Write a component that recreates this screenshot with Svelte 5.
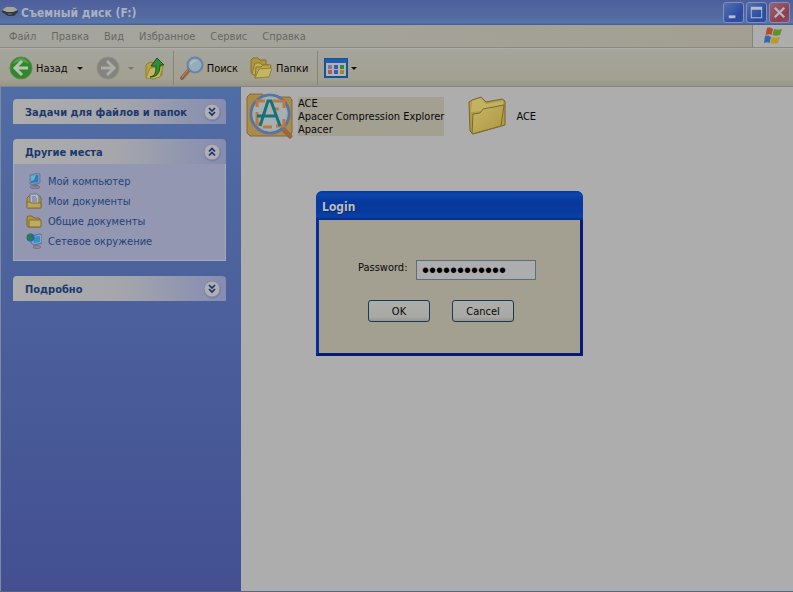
<script lang="ts">
	const menus = ['Файл', 'Правка', 'Вид', 'Избранное', 'Сервис', 'Справка'];
	const places = [
		{ icon: 'computer', name: 'Мой компьютер' },
		{ icon: 'documents', name: 'Мои документы' },
		{ icon: 'folder', name: 'Общие документы' },
		{ icon: 'network', name: 'Сетевое окружение' }
	];
	const viewDots = ['#7d78a0', '#3c5cab', '#2f8b35', '#ab5962', '#3c5cab', '#b07c37'];

	let password = $state('apacer123456');
</script>

{#snippet chevron(up: boolean)}
	<svg class="chevron" viewBox="0 0 20 20" aria-hidden="true">
		<circle cx="10.500" cy="10" r="8.500" fill="#68709a" opacity=".6" />
		<circle cx="10" cy="9" r="8" fill="#aeaeb4" stroke="#8189a8" />
		{#if up}
			<path d="M7 8.500l3-3 3 3M7 12.500l3-3 3 3" fill="none" stroke="#162f68" stroke-width="1.600" />
		{:else}
			<path d="M7 5l3 3 3-3M7 9l3 3 3-3" fill="none" stroke="#162f68" stroke-width="1.600" />
		{/if}
	</svg>
{/snippet}

{#snippet placeIcon(name: string)}
	<svg class="place-icon" viewBox="0 0 16 16" aria-hidden="true">
		{#if name === 'computer'}
			<ellipse cx="9" cy="14" rx="5" ry="1.800" fill="#8d8497" stroke="#655f80" stroke-width=".6" />
			<path d="M8 10l3-1 1 4-4 1z" fill="#756c91" />
			<path d="M4 2l8-2 2 1v9l-8 2-2-1z" fill="#7891b8" stroke="#56719d" stroke-width=".7" />
			<path d="M5 3l7-1v7l-7 1z" fill="#267fba" />
			<path d="M5 3l5-1-2 5-3 1z" fill="#73acd0" />
		{:else if name === 'documents'}
			<path d="M1 5l2-2h11l1 2v9l-1 1H2l-1-1z" fill="#b39a49" stroke="#826b25" />
			<path d="M4 1h7l2 2v8H4z" fill="#b5b9c1" stroke="#667497" />
			<path d="M6 4h4M6 6h5M6 8h5" stroke="#60789e" />
			<path d="M1 9h3l1 1h10v5H1z" fill="#b9a65e" stroke="#856e2b" />
		{:else if name === 'folder'}
			<path d="M1 13V4l1-1h4l2 2h5l1 1v8H2z" fill="#af9843" stroke="#80682b" />
			<path d="M3 7h12v7H3z" fill="#bdac5e" stroke="#846d2d" />
		{:else}
			<ellipse cx="11" cy="14" rx="4" ry="1.500" fill="#938995" stroke="#665f7b" stroke-width=".6" />
			<path d="M5 3l9-2 2 1v8l-8 2-3-2z" fill="#7fa6c7" stroke="#475f91" stroke-width=".8" />
			<path d="M7 4l7-1v6l-6 1z" fill="#388fc0" />
			<circle cx="4.500" cy="4.500" r="4" fill="#22699f" />
			<path d="M1 3c2-3 5-3 5-1L4 4l2 2-2 2c-2-1-3-3-3-5" fill="#28823d" />
		{/if}
	</svg>
{/snippet}

<div class="window">
	<header class="titlebar">
		<svg class="drive" viewBox="0 0 16 16" aria-hidden="true">
			<path d="M0 5l4-3h8l4 3v2l-4 4H6L0 7z" fill="#343740" />
			<path d="M0 5l4-3h8l4 3-5 2H5z" fill="#a5a4a0" />
			<path d="M6 9h4" stroke="#6f7673" />
		</svg>
		<h1>Съемный диск (F:)</h1>
		<button class="control" aria-label="Свернуть">
			<svg viewBox="0 0 20 20"><path d="M5 13h7v3H5z" fill="#b9bdcb" /></svg>
		</button>
		<button class="control" aria-label="Развернуть">
			<svg viewBox="0 0 20 20"><path d="M4 4h12v12H4zM5 7v8h10V7z" fill="#b9bdcb" fill-rule="evenodd" /></svg>
		</button>
		<button class="control close" aria-label="Закрыть">
			<svg viewBox="0 0 20 20"><path d="M5 5l10 10M15 5L5 15" stroke="#b9b7bd" stroke-width="2.400" /></svg>
		</button>
	</header>

	<nav class="menubar">
		{#each menus as menu}
			<button>{menu}</button>
		{/each}
		<div class="flag">
			<svg viewBox="0 0 20 18" aria-hidden="true">
				<path d="M4 1c3-1 4 0 6 1L8.500 8C7 7 5 7 2.500 8z" fill="#b44c2c" />
				<path d="M11 2c3 1 5 1 8 0l-2 6c-3 1-5 1-7.500 0z" fill="#5d932c" />
				<path d="M2 9c3-1 4 0 6 1l-1.500 6C5 15 3 15 1 16z" fill="#3368ae" />
				<path d="M9 10c3 1 5 1 8 0l-2 6c-3 1-5 1-7.500 0z" fill="#bd9b23" />
			</svg>
		</div>
	</nav>

	<div class="toolbar">
		<button class="back">
			<svg class="tool-icon" viewBox="0 0 24 24" aria-hidden="true">
				<circle cx="12" cy="12" r="11" fill="#2e8929" stroke="#58894e" />
				<path d="M4 8c2-7 13-8 16 0-5-3-10-3-16 0" fill="#67ac5a" opacity=".7" />
				<path d="M13 5l-7 7 7 7M7 12h12" fill="none" stroke="#bac1b3" stroke-width="3" />
			</svg>
			<span>Назад</span>
			<i class="arrow"></i>
		</button>
		<button class="forward" aria-label="Вперед" disabled>
			<svg class="tool-icon" viewBox="0 0 24 24" aria-hidden="true">
				<circle cx="12" cy="12" r="11" fill="#83837f" stroke="#91918b" />
				<path d="M11 5l7 7-7 7M17 12H5" fill="none" stroke="#adada8" stroke-width="3" />
			</svg>
			<i class="arrow"></i>
		</button>
		<button class="up" aria-label="Вверх">
			<svg class="tool-icon" viewBox="0 0 24 24" aria-hidden="true">
				<path d="M2 21V9l2-2 4-1 2 3h8v10l-9 4z" fill="#b8a344" stroke="#927c2b" />
				<path d="M2 22l4-10 13-2-3 11-7 2z" fill="#c2b55d" stroke="#998735" />
				<path d="M6 21c6-1 6-6 6-11H7l6-8 7 7h-4c0 8-3 12-10 12" fill="#2e8f31" stroke="#1d5222" />
			</svg>
		</button>
		<span class="divider"></span>
		<button class="search">
			<svg class="tool-icon" viewBox="0 0 24 24" aria-hidden="true">
				<path d="M9 14l-7 8" stroke="#8e6343" stroke-width="4" stroke-linecap="round" />
				<path d="M8 14l-6 7" stroke="#bd946c" />
				<circle cx="15" cy="9" r="7.500" fill="#95adbb" stroke="#6783aa" stroke-width="2" />
				<path d="M10 9c0-4 5-6 8-4-3 0-6 2-8 4" fill="#b6c0c5" />
			</svg>
			<span>Поиск</span>
		</button>
		<button class="folders">
			<svg class="tool-icon" viewBox="0 0 24 24" aria-hidden="true">
				<path d="M2 16V4l2-2h5l2 2h6v9L4 19z" fill="#ad963c" stroke="#87702b" />
				<path d="M3 18L6 7h5l2 2h7v8l-13 3z" fill="#c0ad55" stroke="#91792c" />
				<path d="M6 22l1-11h5l2-2h8l-2 11z" fill="#b9a54e" stroke="#8d762a" />
				<path d="M6 22l4-9 13-1-3 9z" fill="#c3b765" stroke="#96822f" />
			</svg>
			<span>Папки</span>
		</button>
		<span class="divider"></span>
		<button class="views" aria-label="Вид">
			<svg class="tool-icon" viewBox="0 0 24 24" aria-hidden="true">
				<path d="M1 3h22v18H1z" fill="#b0b4b5" stroke="#165295" stroke-width="2" />
				<path d="M1 3h22v4H1z" fill="#1f5dab" />
				{#each viewDots as dot, i}
					<rect x={4 + (i % 3) * 6} y={i < 3 ? 9 : 14} width="4" height="4" fill={dot} />
				{/each}
			</svg>
			<i class="arrow"></i>
		</button>
	</div>

	<div class="content">
		<aside>
			<section>
				<button class="heading"><span>Задачи для файлов и папок</span>{@render chevron(false)}</button>
			</section>
			<section>
				<button class="heading"><span>Другие места</span>{@render chevron(true)}</button>
				<ul>
					{#each places as place}
						<li><a href="#places">{@render placeIcon(place.icon)}{place.name}</a></li>
					{/each}
				</ul>
			</section>
			<section>
				<button class="heading"><span>Подробно</span>{@render chevron(false)}</button>
			</section>
		</aside>

		<main>
			<div class="file">
				<svg class="file-icon" viewBox="0 0 48 48" aria-hidden="true">
					<path d="M1 5l3-3h12l4 3h24l2 3v33l-3 3H4l-3-3z" fill="#a98c49" stroke="#826b3a" />
					<path d="M37 37l7 7" stroke="#9b673f" stroke-width="5" stroke-linecap="round" />
					<circle cx="24" cy="22" r="19" fill="#a8afb0" stroke="#5a749f" stroke-width="3" />
					<circle cx="24" cy="22" r="17" fill="none" stroke="#99adb9" />
					<path d="M19 9h-8v6M11 20v12h5M27 9h11v7M27 17h6M38 27v7h-8M17 35h9" fill="none" stroke="#bd7840" stroke-width="3" />
					<path d="M14 34L22 9h3l9 25M11 24h20" fill="none" stroke="#167276" stroke-width="3" />
				</svg>
				<p class="selected">ACE<br />Apacer Compression Explorer<br />Apacer</p>
			</div>
			<div class="file folder">
				<svg class="file-icon" viewBox="0 0 48 48" aria-hidden="true">
					<path d="M6 39L5 10l3-2 9-3 5 5 16-3 3 2v24L9 42z" fill="#b49c42" stroke="#78662f" />
					<path d="M8 9l9-3 5 6 17-3v8L7 20z" fill="#c2b361" />
					<path d="M8 42L9 22l7-1 3-4 21-4-3 21z" fill="url(#folder-front)" stroke="#7b692f" />
					<defs>
						<linearGradient id="folder-front" x1="0" y1="0" x2="1" y2="1">
							<stop stop-color="#c2b76e" />
							<stop offset="1" stop-color="#b0963a" />
						</linearGradient>
					</defs>
				</svg>
				<p>ACE</p>
			</div>
		</main>
	</div>

	<div class="dialog" role="dialog" aria-labelledby="login-title">
		<h2 id="login-title">Login</h2>
		<form onsubmit={(e) => e.preventDefault()}>
			<div class="field">
				<label for="password">Password:</label>
				<input id="password" type="password" bind:value={password} />
			</div>
			<div class="actions">
				<button type="submit">OK</button>
				<button type="button">Cancel</button>
			</div>
		</form>
	</div>
</div>

<style>
	:global(body) {
		margin: 0;
		background: #adadad;
	}

	.window {
		position: relative;
		box-sizing: border-box;
		display: flex;
		flex-direction: column;
		min-height: 100vh;
		border-bottom: 1px solid #5b6285;
		font: 11px/13px 'DejaVu Sans Condensed', 'Noto Sans', sans-serif;
		color: #080808;
	}

	button {
		padding: 0;
		border: 0;
		background: none;
		font: inherit;
		color: inherit;
	}

	svg {
		display: block;
		flex: none;
	}

	.titlebar {
		display: flex;
		align-items: center;
		gap: 2px;
		height: 25px;
		padding: 0 3px 0 2px;
		background: linear-gradient(#4c5f9c, #53669f 40%, #536a9f 65%, #5675ad 90%, #465b91);
	}

	.drive {
		width: 16px;
		height: 16px;
	}

	h1 {
		flex: 1;
		margin: 0 0 0 1px;
		font: bold 12px/16px 'DejaVu Sans Condensed', sans-serif;
		color: #aab1c3;
	}

	.control {
		box-sizing: border-box;
		width: 21px;
		height: 21px;
		border: 1px solid #858fb6;
		border-radius: 3px;
		background: linear-gradient(135deg, #5572b2, #294aa4 70%, #314fa4);
	}

	.control svg {
		width: 19px;
		height: 19px;
	}

	.close {
		background: linear-gradient(135deg, #9b6170, #8c3f51 70%, #94495a);
	}

	.menubar {
		display: flex;
		box-sizing: border-box;
		height: 23px;
		padding-left: 9px;
		border-bottom: 1px solid #8c8a7d;
		background: linear-gradient(90deg, #a5a5a0, #a29f91);
		color: #686860;
	}

	.menubar button {
		margin-right: 15px;
	}

	.flag {
		display: grid;
		place-items: center;
		width: 40px;
		margin-left: auto;
		border-left: 1px solid #85847d;
		background: #adadad;
	}

	.flag svg {
		width: 20px;
		height: 18px;
	}

	.toolbar {
		display: flex;
		box-sizing: border-box;
		align-items: center;
		height: 39px;
		padding: 1px 0 0 9px;
		border-top: 1px solid #adada8;
		border-bottom: 1px solid #85857d;
		background: linear-gradient(#a6a59e, #a3a192 80%, #98968a);
	}

	.toolbar button {
		display: flex;
		align-items: center;
		gap: 3px;
	}

	.tool-icon {
		width: 24px;
		height: 24px;
	}

	.arrow {
		border: 3px solid transparent;
		border-top-color: #111;
		border-bottom: 0;
	}

	.back .arrow {
		margin-left: 6px;
	}

	.forward {
		margin: 0 10px 0 13px;
	}

	.toolbar .forward {
		gap: 8px;
	}

	.forward .arrow {
		border-top-color: #77776f;
	}

	.divider {
		width: 1px;
		height: 34px;
		margin: 0 6px 0 5px;
		background: #85847a;
	}

	.folders {
		margin: 0 4px 0 11px;
	}

	.content {
		display: flex;
		flex: 1;
	}

	aside {
		display: flex;
		flex-direction: column;
		gap: 15px;
		box-sizing: border-box;
		width: 241px;
		padding: 12px 15px 12px 12px;
		border-left: 1px solid #7c8c9c;
		background: linear-gradient(#516da5, #4b609c 45%, #434f91);
	}

	.heading {
		display: flex;
		align-items: center;
		justify-content: space-between;
		box-sizing: border-box;
		width: 100%;
		height: 25px;
		padding: 2px 4px 0 12px;
		border-radius: 4px 4px 0 0;
		background: linear-gradient(90deg, #adadad, #a5a6ac 50%, #858cb0);
		font-weight: bold;
		color: #1a3870;
	}

	.chevron {
		width: 20px;
		height: 20px;
	}

	ul {
		margin: 0;
		padding: 7px 12px 9px;
		border: 1px solid #a8a9b2;
		border-top: 0;
		background: #9397b1;
		list-style: none;
	}

	a {
		display: flex;
		align-items: center;
		gap: 6px;
		height: 20px;
		color: #1f4379;
		text-decoration: none;
	}

	.place-icon {
		width: 16px;
		height: 16px;
	}

	main {
		display: flex;
		flex: 1;
		align-items: flex-start;
		gap: 20px;
		padding: 5px;
		background: #adadad;
	}

	.file {
		display: flex;
		align-items: center;
		gap: 4px;
	}

	.file-icon {
		width: 48px;
		height: 48px;
	}

	p {
		margin: 0;
	}

	.selected {
		background: #a3a092;
	}

	.dialog {
		position: absolute;
		top: 191px;
		left: 316px;
		box-sizing: border-box;
		width: 267px;
		border: 3px solid #092b9c;
		border-top: 0;
		border-right-color: #061b75;
		border-bottom-color: #061b75;
		border-radius: 7px 7px 0 0;
		background: #a3a092;
	}

	h2 {
		margin: 0 -3px;
		padding: 8px 6px 4px;
		border-radius: 6px 6px 0 0;
		background: linear-gradient(#073795, #0c45ad 12%, #07389d 35%, #073a9e 70%, #0940a9 88%, #072c82);
		font: bold 12px/17px 'DejaVu Sans Condensed', sans-serif;
		color: #b5bdca;
		text-shadow: 1px 1px #10245f;
	}

	form {
		padding: 40px 44px 31px 39px;
	}

	.field {
		display: flex;
		justify-content: space-between;
	}

	label {
		line-height: 15px;
	}

	input {
		box-sizing: border-box;
		width: 120px;
		height: 20px;
		padding: 0 5px;
		border: 1px solid #59707f;
		border-radius: 0;
		outline: 0;
		background: #adadad;
		font: 20px/18px 'Liberation Sans', sans-serif;
		color: #000;
	}

	.actions {
		display: flex;
		gap: 22px;
		margin: 20px 0 0 10px;
	}

	.actions button {
		width: 62px;
		height: 22px;
		border: 1px solid #173b55;
		border-radius: 3px;
		background: linear-gradient(#adadab, #a8a8a4 80%, #96958e);
	}
</style>
